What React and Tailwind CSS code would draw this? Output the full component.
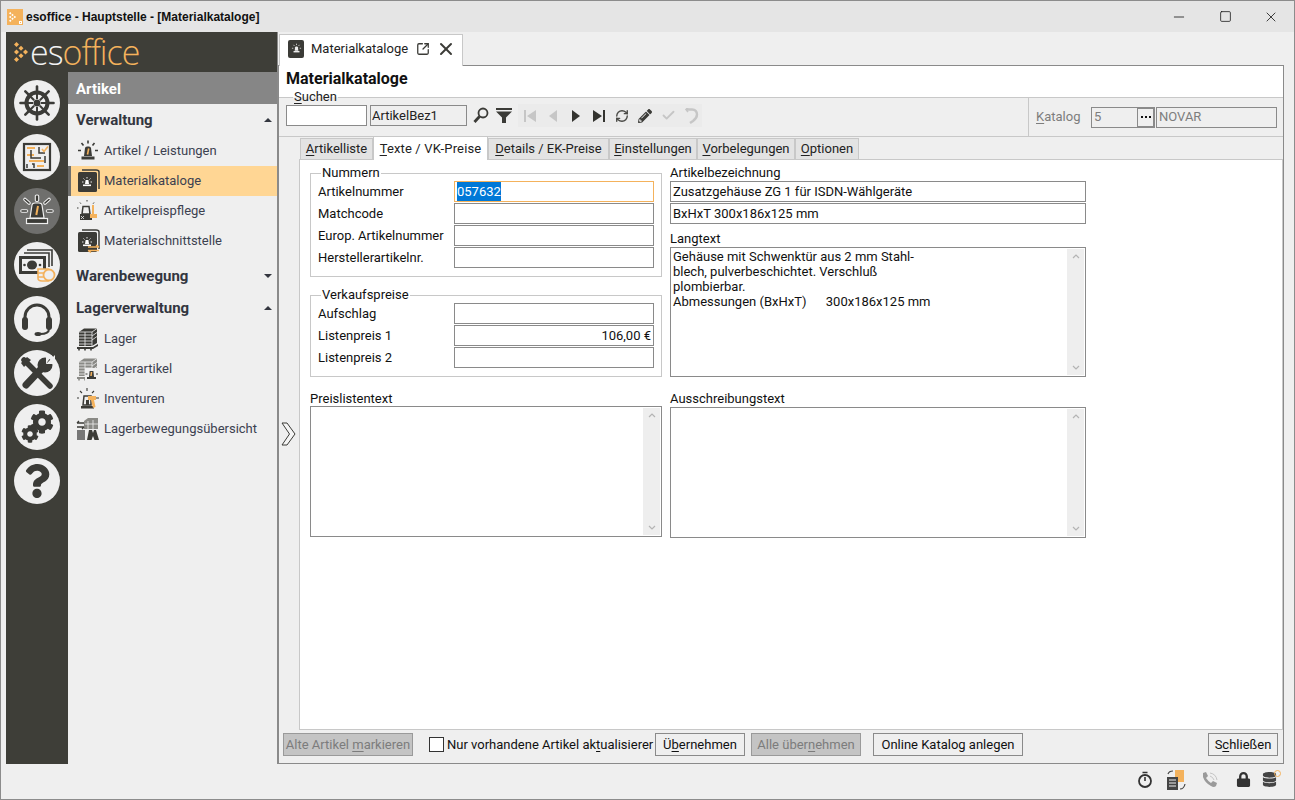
import React from 'react';
import { Minus, Square, X, RefreshCw, SquareArrowOutUpRight, Check, Undo2 } from 'lucide-react';
import { FaCog, FaQuestion, FaPencilAlt, FaLock, FaDatabase } from 'react-icons/fa';

const dark = '#3b3b37';
const orange = '#f4b25c';

function Siren({ size = 24, body = dark, slash = orange }) {
  return (
    <svg width={size} height={size} viewBox="0 0 24 24">
      <path d="M8 17 L9 9 Q9.3 7.5 11 7.5 H13 Q14.7 7.5 15 9 L16 17Z" fill={body} />
      <path d="M12.7 9.5 L11.5 15.5" stroke={slash} strokeWidth="1.6" />
      <rect x="5.5" y="17.5" width="13" height="3" fill={body} />
      <path d="M12 1.5V4.5M5.5 4L7.5 6.5M18.5 4L16.5 6.5M2 11.5H5M19 11.5H22" stroke={body} strokeWidth="1.6" />
    </svg>
  );
}

function ActiveSiren() {
  return (
    <svg width="36" height="36" viewBox="0 0 36 36">
      <path d="M11 25L13 12Q13.4 10 16 10H20Q22.6 10 23 12L25 25Z" fill={dark} stroke="#efefef" strokeWidth="1.2" />
      <path d="M19 13L17.3 22" stroke={orange} strokeWidth="2" />
      <rect x="7.5" y="25.5" width="21" height="5" fill={dark} stroke="#efefef" strokeWidth="1.2" />
      <rect x="16.3" y="2" width="3.4" height="6.5" rx="1.2" fill={dark} stroke="#efefef" strokeWidth="1.1" />
      <path d="M6 6.5L10 10M30 6.5L26 10" stroke="#efefef" strokeWidth="3.6" strokeLinecap="round" />
      <path d="M6 6.5L10 10M30 6.5L26 10" stroke={dark} strokeWidth="1.6" strokeLinecap="round" />
      <path d="M3 18H7.5M28.5 18H33" stroke="#efefef" strokeWidth="3.6" strokeLinecap="round" />
      <path d="M3 18H7.5M28.5 18H33" stroke={dark} strokeWidth="1.6" strokeLinecap="round" />
    </svg>
  );
}

function CatalogIcon({ extra }) {
  return (
    <svg width="23" height="24" viewBox="0 0 23 24">
      <path d="M5 1H19Q22 1 22 3V20" fill="none" stroke={dark} strokeWidth="1.5" />
      <rect x="1" y="3" width="19" height="20" rx="1.5" fill={dark} />
      <path d="M8 15L8.6 11H11.4L12 15Z" fill="#fff" />
      <rect x="6" y="15.5" width="8" height="1.6" fill="#fff" />
      <path d="M10 8V9.5M6.5 9.5L7.5 10.5M13.5 9.5L12.5 10.5M5 13H6.5M13.5 13H15" stroke="#fff" strokeWidth="0.9" />
      {extra === 'arrows' && <path d="M11 18H22M19 16L22 18M11 21.5H22M14 23.5L11 21.5" stroke={orange} strokeWidth="1.4" fill="none" />}
    </svg>
  );
}

function PriceIcon() {
  return (
    <svg width="24" height="24" viewBox="0 0 24 24">
      <path d="M11 1V3.5M4 3.5L5.5 5.5M18 3.5L16.5 5.5M1 9H3" stroke={dark} strokeWidth="1" strokeDasharray="1.5 1" />
      <path d="M6 15L7 7.5H13L14 15Z" fill="none" stroke={dark} strokeWidth="1.5" />
      <rect x="4" y="15" width="12" height="6" fill={dark} />
      <path d="M5 17L8 20M8 17L5 20" stroke="#efefef" strokeWidth="0.8" />
      <rect x="16" y="6" width="2" height="9" fill={orange} />
      <rect x="14" y="15" width="7" height="4" fill={orange} />
    </svg>
  );
}

function PalletIcon({ light, extra }) {
  const c = light ? '#8a8a86' : dark;
  return (
    <svg width="24" height="24" viewBox="0 0 24 24">
      <path d="M3 5L8 1.5H21V16L16 19H3Z" fill={c} />
      <path d="M3 8H16M3 11H16M3 14H16M3 17H16M9 5V19M16 5V19M16 5L21 1.5M3 5H16M16 9L21 5.5M16 13L21 9.5" stroke="#efefef" strokeWidth="0.8" />
      <path d="M1 20H17L22 17V19L17 22H1Z" fill={c} />
      <path d="M3 22V23.5M9 22V23.5M15 22V23.5" stroke={c} strokeWidth="1.6" />
      {extra === 'siren' && (
        <g>
          <rect x="9" y="11" width="14" height="13" fill="#efefef" />
          <path d="M13 20L13.6 14H17.4L18 20Z" fill={dark} />
          <path d="M15.5 15L15 19" stroke={orange} strokeWidth="1.5" />
          <rect x="11" y="20" width="9" height="2" fill={dark} />
          <path d="M9.5 17H11.5M20 17H22" stroke={dark} strokeWidth="1" />
        </g>
      )}
    </svg>
  );
}

function InventurIcon() {
  return (
    <svg width="24" height="24" viewBox="0 0 24 24">
      <path d="M11 1V4M4 4L6 6M18 4L16 6M1 11H3M20 11H23" stroke={dark} strokeWidth="1.1" />
      <path d="M7 18L8 9H15V18Z" fill="none" stroke={dark} strokeWidth="1.5" />
      <rect x="10" y="13" width="3" height="5" fill={dark} />
      <rect x="5" y="19" width="13" height="2.5" fill={dark} />
      <path d="M12 9H20V13H18L19.5 20L17 21L15 13H12Z" fill={orange} />
    </svg>
  );
}

function MoveIcon() {
  return (
    <svg width="24" height="24" viewBox="0 0 24 24">
      <path d="M8 4L12 1H22V12H8Z" fill="#8a8a86" />
      <path d="M12 4V12M17 3V12M9 7H22" stroke="#efefef" strokeWidth="0.8" />
      <path d="M1 6H8M1 10H8M1 6L3 4M8 10L6 12" stroke={dark} strokeWidth="1.3" />
      <rect x="1" y="13" width="8" height="10" fill="#777" />
      <path d="M11 23L13 13H16L17 16L18 13H20L23 23H18.5L17 19L15.5 23Z" fill={dark} />
    </svg>
  );
}

function PlanIcon() {
  return (
    <svg width="30" height="30" viewBox="0 0 30 30">
      <rect x="2" y="2" width="26" height="26" fill="none" stroke={dark} strokeWidth="2.2" />
      <path d="M5 6H13M5 13H12M7 19H22M15 24H22" stroke={orange} strokeWidth="2" />
      <path d="M9 8V16H19M17 5V11H23M23 14V21M5 22V26M10 22H12V26" stroke={dark} strokeWidth="1.5" fill="none" />
      <path d="M20 7L22 9.5L26 4.5" stroke={orange} strokeWidth="1.6" fill="none" />
    </svg>
  );
}

function MoneyIcon() {
  return (
    <svg width="38" height="36" viewBox="0 0 38 36">
      <path d="M9 3H34V19M6 6H31V20" fill="none" stroke={dark} strokeWidth="1.6" />
      <rect x="1" y="9" width="27" height="18" fill={dark} />
      <rect x="4" y="12" width="21" height="12" fill="#efefef" />
      <ellipse cx="14" cy="18" rx="5" ry="4.5" fill={dark} />
      <circle cx="6.5" cy="18" r="1.3" fill={dark} />
      <circle cx="22" cy="18" r="1.3" fill={dark} />
      <path d="M20 22H30V34H24Q20 34 20 31Z" fill="#efefef" stroke={orange} strokeWidth="1.6" />
      <path d="M20 26H27M20 30H27" stroke={orange} strokeWidth="1.5" />
      <circle cx="31" cy="28" r="5.5" fill="#efefef" stroke={orange} strokeWidth="1.8" />
    </svg>
  );
}

function HeadsetIcon() {
  return (
    <svg width="36" height="36" viewBox="0 0 36 36">
      <path d="M6 20V16A12 12 0 0 1 30 16V20" fill="none" stroke={dark} strokeWidth="3" />
      <rect x="3" y="16" width="6" height="13" rx="3" fill={dark} />
      <rect x="27" y="16" width="6" height="13" rx="3" fill={dark} />
      <path d="M30 28Q30 33 21 33" fill="none" stroke={dark} strokeWidth="2" />
      <ellipse cx="19" cy="33" rx="3.5" ry="2" fill={dark} />
    </svg>
  );
}

function WheelIcon() {
  return (
    <svg width="36" height="36" viewBox="0 0 36 36">
      {[0, 45, 90, 135, 180, 225, 270, 315].map((a) => (
        <g key={a} transform={`rotate(${a} 18 18)`}>
          <path d="M18 1.5V6.5" stroke={dark} strokeWidth="2.6" strokeLinecap="round" />
          <path d="M18 8V14" stroke={dark} strokeWidth="2" />
        </g>
      ))}
      <circle cx="18" cy="18" r="10.5" fill="none" stroke={dark} strokeWidth="4" />
      <circle cx="18" cy="18" r="3.5" fill={dark} />
    </svg>
  );
}

function ToolsIcon() {
  return (
    <svg width="36" height="36" viewBox="0 0 36 36">
      <path d="M5 5L31 31" stroke={dark} strokeWidth="5.5" strokeLinecap="round" />
      <path d="M2 8L8 2L12 5L5 12Z" fill={dark} />
      <path d="M7 30L23 13" stroke={dark} strokeWidth="7" strokeLinecap="round" />
      <circle cx="26" cy="10" r="7.5" fill={dark} />
      <path d="M27 9L33 3L36 0V9H27Z M27 9V0H33Z" fill="#efefef" />
    </svg>
  );
}

function GearsIcon() {
  return (
    <span className="relative w-[36px] h-[36px] block">
      <FaCog size={24} color={dark} className="absolute right-[1px] top-[1px]" />
      <FaCog size={18} color={dark} className="absolute left-[2px] bottom-[2px]" />
    </span>
  );
}

function LogoMark() {
  return (
    <svg width="15" height="20" viewBox="0 0 15 20">
      <g fill={orange}>
        <path d="M2.5 0L5 2.5L2.5 5L0 2.5Z" />
        <path d="M2.5 7.5L5 10L2.5 12.5L0 10Z" />
        <path d="M2.5 15L5 17.5L2.5 20L0 17.5Z" />
        <path d="M7 3.7L9.5 6.2L7 8.7L4.5 6.2Z" />
        <path d="M7 11.2L9.5 13.7L7 16.2L4.5 13.7Z" />
        <path d="M11.5 7.5L14 10L11.5 12.5L9 10Z" />
      </g>
    </svg>
  );
}

function RailButton({ active, children }) {
  return (
    <div className={`w-[46px] h-[46px] rounded-full flex items-center justify-center shrink-0 ${active ? 'bg-[#6f6f6d]' : 'bg-[#efefef]'}`}>
      {children}
    </div>
  );
}

function NavItem({ icon, label, active }) {
  return (
    <div className={`h-[30px] flex items-center pl-[8px] gap-[4px] text-[13px] text-[#3c4150] ${active ? 'bg-[#ffd694] border-l-[3px] border-[#6f6f6d] !pl-[5px]' : ''}`}>
      <span className="w-[24px] h-[24px] flex items-center justify-center shrink-0">{icon}</span>
      {label}
    </div>
  );
}

function NavHead({ label, open }) {
  return (
    <div className="h-[32px] flex items-center justify-between pl-[8px] pr-[5px] text-[15px] font-bold text-[#33363f]">
      {label}
      <span className={`w-0 h-0 border-x-[4px] border-x-transparent ${open ? 'border-b-[4px] border-b-[#33363f]' : 'border-t-[4px] border-t-[#33363f]'}`} />
    </div>
  );
}

function Ul({ children }) {
  return <span className="underline underline-offset-2">{children}</span>;
}

function Field({ className = '', children }) {
  return (
    <div className={`h-[21px] border border-[#8a8a8a] bg-white px-[2px] flex items-center text-[13px] text-[#111] whitespace-nowrap overflow-hidden ${className}`}>
      {children}
    </div>
  );
}

function Row({ label, children, right, focus }) {
  return (
    <div className="flex items-center h-[21px]">
      <span className="w-[136px] text-[13px] text-[#111] shrink-0">{label}</span>
      <Field className={`w-[200px] ${right ? 'justify-end' : ''} ${focus ? '!border-[#f4b25c]' : ''}`}>{children}</Field>
    </div>
  );
}

function Group({ title, children }) {
  return (
    <div className="relative border border-[#c8c8c8] pl-[7px] pt-[7px] pb-[8px] flex flex-col gap-[1px]">
      <span className="absolute left-[10px] top-[-9px] bg-white px-[1px] text-[13px] leading-[16px] text-[#111]">{title}</span>
      {children}
    </div>
  );
}

function ScrollBox({ className = '', children }) {
  return (
    <div className={`border border-[#8a8a8a] bg-white flex text-[13px] leading-[15px] text-[#111] ${className}`}>
      <div className="flex-1 px-[2px] py-[1px] whitespace-pre">{children}</div>
      <div className="w-[17px] my-[1px] mr-[1px] bg-[#eeeeee] flex flex-col justify-between items-center py-[4px] text-[#b4b4b4]">
        <svg width="8" height="6" viewBox="0 0 8 6"><path d="M1 5L4 2L7 5" fill="none" stroke="currentColor" strokeWidth="1.2" /></svg>
        <svg width="8" height="6" viewBox="0 0 8 6"><path d="M1 1L4 4L7 1" fill="none" stroke="currentColor" strokeWidth="1.2" /></svg>
      </div>
    </div>
  );
}

function Btn({ disabled, className = '', children }) {
  return (
    <div className={`h-[23px] border flex items-center justify-center text-[13px] whitespace-nowrap ${disabled ? 'bg-[#c4c4c4] border-[#9a9a9a] text-[#7c7c7c]' : 'bg-[#efefef] border-[#8a8a8a] text-[#111]'} ${className}`}>
      {children}
    </div>
  );
}

function SubTab({ active, className = '', children }) {
  return (
    <div className={`flex items-center justify-center border-t border-r border-l border-[#c8c8c8] text-[13px] text-[#222] ${active ? 'h-[24px] bg-white -mb-[1px] relative z-10 border-b-0 tracking-[0.15px]' : 'h-[21px] bg-[#e3e3e3]'} ${className}`}>
      {children}
    </div>
  );
}

export default function App() {
  return (
    <div className="w-[1295px] h-[800px] overflow-hidden border border-[#8c8c8c] bg-[#efefef] flex flex-col font-['Roboto',sans-serif]">
      {/* title bar */}
      <div className="h-[31px] bg-[#e5e5e5] flex items-center shrink-0 pl-[6px]">
        <div className="w-[16px] h-[16px] bg-[#f4b25c] flex items-center pl-[2px] relative mr-[3px]">
          <svg width="7" height="10" viewBox="0 0 14 20">
            <g fill="#fff">
              <path d="M2.5 0L5 2.5L2.5 5L0 2.5Z" />
              <path d="M2.5 7.5L5 10L2.5 12.5L0 10Z" />
              <path d="M2.5 15L5 17.5L2.5 20L0 17.5Z" />
              <path d="M7 3.7L9.5 6.2L7 8.7L4.5 6.2Z" />
              <path d="M7 11.2L9.5 13.7L7 16.2L4.5 13.7Z" />
              <path d="M11.5 7.5L14 10L11.5 12.5L9 10Z" />
            </g>
          </svg>
          <span className="absolute right-[1px] bottom-[1px] w-[3px] h-[3px] border border-white" />
        </div>
        <span className="font-['Liberation_Sans',sans-serif] font-bold text-[12px] text-[#111]">esoffice - Hauptstelle - [Materialkataloge]</span>
        <div className="ml-auto flex items-center">
          <div className="w-[46px] flex justify-center"><Minus size={16} strokeWidth={1.2} color="#111" /></div>
          <div className="w-[46px] flex justify-center"><Square size={13} strokeWidth={1.4} color="#111" /></div>
          <div className="w-[46px] flex justify-center"><X size={16} strokeWidth={1.2} color="#111" /></div>
        </div>
      </div>

      <div className="flex-1 flex pl-[5px] min-h-0">
        {/* sidebar */}
        <div className="w-[272px] h-[732px] shrink-0 flex flex-col bg-[#3e3e38] border-r border-[#8a8a8a]">
          <div className="h-[40px] shrink-0 flex items-center pl-[8px] gap-[1px] text-[34px] leading-none font-['Open_Sans',sans-serif] font-light">
            <LogoMark />
            <span className="text-[#f2f2f2] tracking-[-1px]">es</span>
            <span className="text-[#f4b25c] -ml-[1px] tracking-[-1px]">office</span>
          </div>
          <div className="flex-1 flex min-h-0">
            <div className="w-[62px] shrink-0 flex flex-col items-center gap-[8px] pt-[8px]">
              <RailButton><WheelIcon /></RailButton>
              <RailButton><PlanIcon /></RailButton>
              <RailButton active><ActiveSiren /></RailButton>
              <RailButton><MoneyIcon /></RailButton>
              <RailButton><HeadsetIcon /></RailButton>
              <RailButton><ToolsIcon /></RailButton>
              <RailButton><GearsIcon /></RailButton>
              <RailButton><FaQuestion size={34} color={dark} /></RailButton>
            </div>
            <div className="flex-1 bg-[#efefef] flex flex-col">
              <div className="h-[32px] bg-[#868686] flex items-center pl-[8px] pt-[2px] text-[15px] font-bold text-white">Artikel</div>
              <NavHead label="Verwaltung" open />
              <NavItem icon={<Siren />} label="Artikel / Leistungen" />
              <NavItem active icon={<CatalogIcon />} label="Materialkataloge" />
              <NavItem icon={<PriceIcon />} label="Artikelpreispflege" />
              <NavItem icon={<CatalogIcon extra="arrows" />} label="Materialschnittstelle" />
              <div className="h-[4px]" />
              <NavHead label="Warenbewegung" />
              <NavHead label="Lagerverwaltung" open />
              <NavItem icon={<PalletIcon />} label="Lager" />
              <NavItem icon={<PalletIcon light extra="siren" />} label="Lagerartikel" />
              <NavItem icon={<InventurIcon />} label="Inventuren" />
              <NavItem icon={<MoveIcon />} label="Lagerbewegungsübersicht" />
            </div>
          </div>
        </div>

        {/* main */}
        <div className="flex-1 flex flex-col min-w-0 pr-[10px]">
          {/* document tab */}
          <div className="h-[33px] shrink-0 flex items-end pl-[1px]">
            <div className="w-[184px] h-[32px] bg-white border border-b-0 border-[#c8c8c8] flex items-center pl-[8px] pb-[4px] text-[13px] text-[#222] relative top-[1px] z-10">
              <span className="w-[16px] h-[18px] rounded-[2px] bg-[#3b3b37] mr-[7px] flex items-center justify-center">
                <Siren size={11} body="#efefef" slash="#efefef" />
              </span>
              Materialkataloge
              <SquareArrowOutUpRight size={14} strokeWidth={2.2} color="#3b3b37" className="ml-[8px]" />
              <X size={20} strokeWidth={2.4} color="#3b3b37" className="ml-[6px]" />
            </div>
          </div>

          <div className="h-[699px] shrink-0 border border-[#8a8a8a] flex flex-col">
            {/* heading */}
            <div className="h-[31px] shrink-0 bg-white flex items-center pl-[7px] pb-[6px] text-[16px] font-bold text-[#111]">Materialkataloge</div>

            {/* search band */}
            <div className="h-[40px] shrink-0 border-y border-[#c8c8c8] flex relative">
              <span className="absolute left-[14px] top-[-9px] bg-gradient-to-b from-white from-50% to-[#efefef] to-50% leading-[16px] px-[1px] text-[13px] text-[#222] z-10"><Ul>S</Ul>uchen</span>
              <div className="flex-1 flex items-center pl-[7px] pb-[3px]">
                <div className="w-[81px] h-[21px] border border-[#8a8a8a] bg-white" />
                <div className="w-[97px] h-[21px] border border-[#8a8a8a] ml-[3px] flex items-center px-[1px] text-[13px] text-[#222]">ArtikelBez1</div>
                <svg width="16" height="17" viewBox="0 0 16 17" className="ml-[6px]">
                  <circle cx="10" cy="6" r="4.5" fill="none" stroke="#3b3b37" strokeWidth="1.8" />
                  <path d="M6.5 9.5L1.5 15" stroke="#3b3b37" strokeWidth="2.8" />
                </svg>
                <svg width="16" height="15" viewBox="0 0 16 15" className="ml-[7px]">
                  <path d="M0 0H16V2H0ZM0 3.5H16L10 9.5V15H6V9.5Z" fill="#3b3b37" />
                </svg>
                <div className="ml-[6px] h-[23px] w-[184px] bg-[#ebebeb] flex items-center pl-[5px] gap-[9px]">
                  <svg width="14" height="14" viewBox="0 0 14 14"><path d="M1 1H3V13H1ZM13 1V13L4 7Z" fill="#c6c6c6" /></svg>
                  <svg width="14" height="14" viewBox="0 0 14 14"><path d="M11 1V13L3 7Z" fill="#c6c6c6" /></svg>
                  <svg width="14" height="14" viewBox="0 0 14 14"><path d="M3 1V13L11 7Z" fill="#33332f" /></svg>
                  <svg width="14" height="14" viewBox="0 0 14 14"><path d="M1 1V13L10 7ZM11 1H13V13H11Z" fill="#33332f" /></svg>
                  <RefreshCw size={14} strokeWidth={2.4} color="#4a4a46" />
                  <FaPencilAlt size={14} color="#3b3b37" />
                  <Check size={15} strokeWidth={3} color="#c6c6c6" />
                  <svg width="14" height="16" viewBox="0 0 14 16"><path d="M1 1.5H7Q12 1.5 12 6.5Q12 10 8 13L5 15" fill="none" stroke="#c6c6c6" strokeWidth="2.4" /><path d="M3 0L1 1.5L3 4" fill="none" stroke="#c6c6c6" strokeWidth="1.6" /></svg>
                </div>
              </div>
              <div className="w-[255px] border-l border-[#c8c8c8] flex items-center pl-[7px] text-[13px] text-[#7d7d7d]">
                <span className="w-[55px]"><Ul>K</Ul>atalog</span>
                <div className="w-[64px] h-[21px] border border-[#8a8a8a] flex items-center justify-between pl-[2px]">
                  5
                  <span className="w-[17px] h-[19px] border border-[#8a8a8a] flex items-center justify-center">
                    <svg width="10" height="2" viewBox="0 0 10 2"><path d="M0 0h2v2H0zM4 0h2v2H4zM8 0h2v2H8z" fill="#111" /></svg>
                  </span>
                </div>
                <div className="w-[121px] h-[21px] border border-[#8a8a8a] flex items-center px-[2px] ml-[1px]">NOVAR</div>
              </div>
            </div>

            {/* page area */}
            <div className="flex-1 flex flex-col bg-[#efefef] min-h-0">
              <div className="flex">
                <div className="w-[20px] shrink-0 flex items-center justify-center pr-[2px]">
                  <svg width="15" height="24" viewBox="0 0 15 24">
                    <path d="M1 1H6L14 12L6 23H1L8.5 12Z" fill="#f5f5f5" stroke="#3b3b37" strokeWidth="1" strokeLinejoin="round" />
                  </svg>
                </div>
                <div className="flex-1 flex flex-col min-w-0">
                  <div className="h-[22px] shrink-0 flex items-end pl-[1px]">
                    <SubTab className="w-[73px]"><span><Ul>A</Ul>rtikelliste</span></SubTab>
                    <SubTab active className="w-[115px]"><span><Ul>T</Ul>exte / VK-Preise</span></SubTab>
                    <SubTab className="w-[121px]"><span><Ul>D</Ul>etails / EK-Preise</span></SubTab>
                    <SubTab className="w-[88px]"><span><Ul>E</Ul>instellungen</span></SubTab>
                    <SubTab className="w-[98px]"><span><Ul>V</Ul>orbelegungen</span></SubTab>
                    <SubTab className="w-[64px]"><span><Ul>O</Ul>ptionen</span></SubTab>
                  </div>
                  <div className="h-[571px] shrink-0 bg-white border border-[#c8c8c8] flex gap-[8px] pl-[10px] pt-[5px]">
                    <div className="w-[352px] flex flex-col">
                      <div className="mt-[8px]">
                        <Group title="Nummern">
                          <Row label="Artikelnummer" focus><span className="bg-[#0078d7] text-white">057632</span></Row>
                          <Row label="Matchcode" />
                          <Row label="Europ. Artikelnummer" />
                          <Row label="Herstellerartikelnr." />
                        </Group>
                      </div>
                      <div className="mt-[18px]">
                        <Group title="Verkaufspreise">
                          <Row label="Aufschlag" />
                          <Row label="Listenpreis 1" right>106,00 €</Row>
                          <Row label="Listenpreis 2" />
                        </Group>
                      </div>
                      <div className="mt-[14px] text-[13px] leading-[15px] text-[#111]">Preislistentext</div>
                      <ScrollBox className="w-[352px] h-[131px]" />
                    </div>
                    <div className="w-[416px] flex flex-col">
                      <div className="text-[13px] leading-[16px] text-[#111]">Artikelbezeichnung</div>
                      <Field>Zusatzgehäuse ZG 1 für ISDN-Wählgeräte</Field>
                      <Field className="mt-[1px]">BxHxT 300x186x125 mm</Field>
                      <div className="mt-[7px] text-[13px] leading-[16px] text-[#111]">Langtext</div>
                      <ScrollBox className="h-[130px]">{'Gehäuse mit Schwenktür aus 2 mm Stahl-\nblech, pulverbeschichtet. Verschluß\nplombierbar.\nAbmessungen (BxHxT)      300x186x125 mm'}</ScrollBox>
                      <div className="mt-[14px] text-[13px] leading-[16px] text-[#111]">Ausschreibungstext</div>
                      <ScrollBox className="h-[131px]" />
                    </div>
                  </div>
                </div>
              </div>

              {/* bottom buttons */}
              <div className="flex items-center mt-[3px] pl-[4px]">
                <Btn disabled className="w-[130px]"><span>Alte Artikel <Ul>m</Ul>arkieren</span></Btn>
                <div className="ml-[16px] w-[15px] h-[15px] border border-[#333] bg-white mr-[3px]" />
                <span className="text-[13px] text-[#111] w-[208px] whitespace-nowrap">Nur vorhandene Artikel ak<Ul>t</Ul>ualisierer</span>
                <Btn className="w-[90px]"><span>Ü<Ul>b</Ul>ernehmen</span></Btn>
                <Btn disabled className="w-[110px] ml-[6px]"><span>Alle über<Ul>n</Ul>ehmen</span></Btn>
                <Btn className="w-[150px] ml-[12px]">Online Katalog anlegen</Btn>
                <Btn className="w-[70px] ml-auto mr-[5px]"><span>S<Ul>c</Ul>hließen</span></Btn>
              </div>
            </div>
          </div>
        </div>
      </div>

      {/* status bar */}
      <div className="h-[34px] shrink-0 flex items-center justify-end pr-[17px] pb-[5px] gap-[13px]">
        <svg width="16" height="18" viewBox="0 0 16 18"><circle cx="8" cy="10" r="6" fill="none" stroke="#333" strokeWidth="1.8" /><path d="M8 6V10M5.5 1.5H10.5" stroke="#333" strokeWidth="1.6" /></svg>
        <svg width="20" height="22" viewBox="0 0 20 22"><rect x="9" y="1" width="9" height="12" fill={orange} /><rect x="1" y="8" width="11" height="13" fill="#444" /><path d="M3 11H10M3 14H10M3 17H10" stroke="#efefef" strokeWidth="1" /><path d="M2 5Q3 2 7 2M19 15Q18 20 14 20" fill="none" stroke="#444" strokeWidth="1.2" /></svg>
        <svg width="18" height="18" viewBox="0 0 18 18" className="ml-[2px]">
          <path d="M2 2L5 1L7 5L5 7Q7 10 10 12L12 10L16 12L15 15Q13 17 10 15Q4 12 2 6Z" fill="#9a9a9a" />
          <path d="M9 2Q15 3 16 9M9 5Q12 6 13 9" fill="none" stroke="#c4c4c4" strokeWidth="1" />
        </svg>
        <span className="ml-[4px]"><FaLock size={15} color="#333" /></span>
        <span className="relative -ml-[2px]"><FaDatabase size={15} color="#444" /><span className="absolute -right-[4px] -top-[2px] w-[7px] h-[7px] rounded-full border border-[#f4b25c]" /></span>
      </div>
    </div>
  );
}
